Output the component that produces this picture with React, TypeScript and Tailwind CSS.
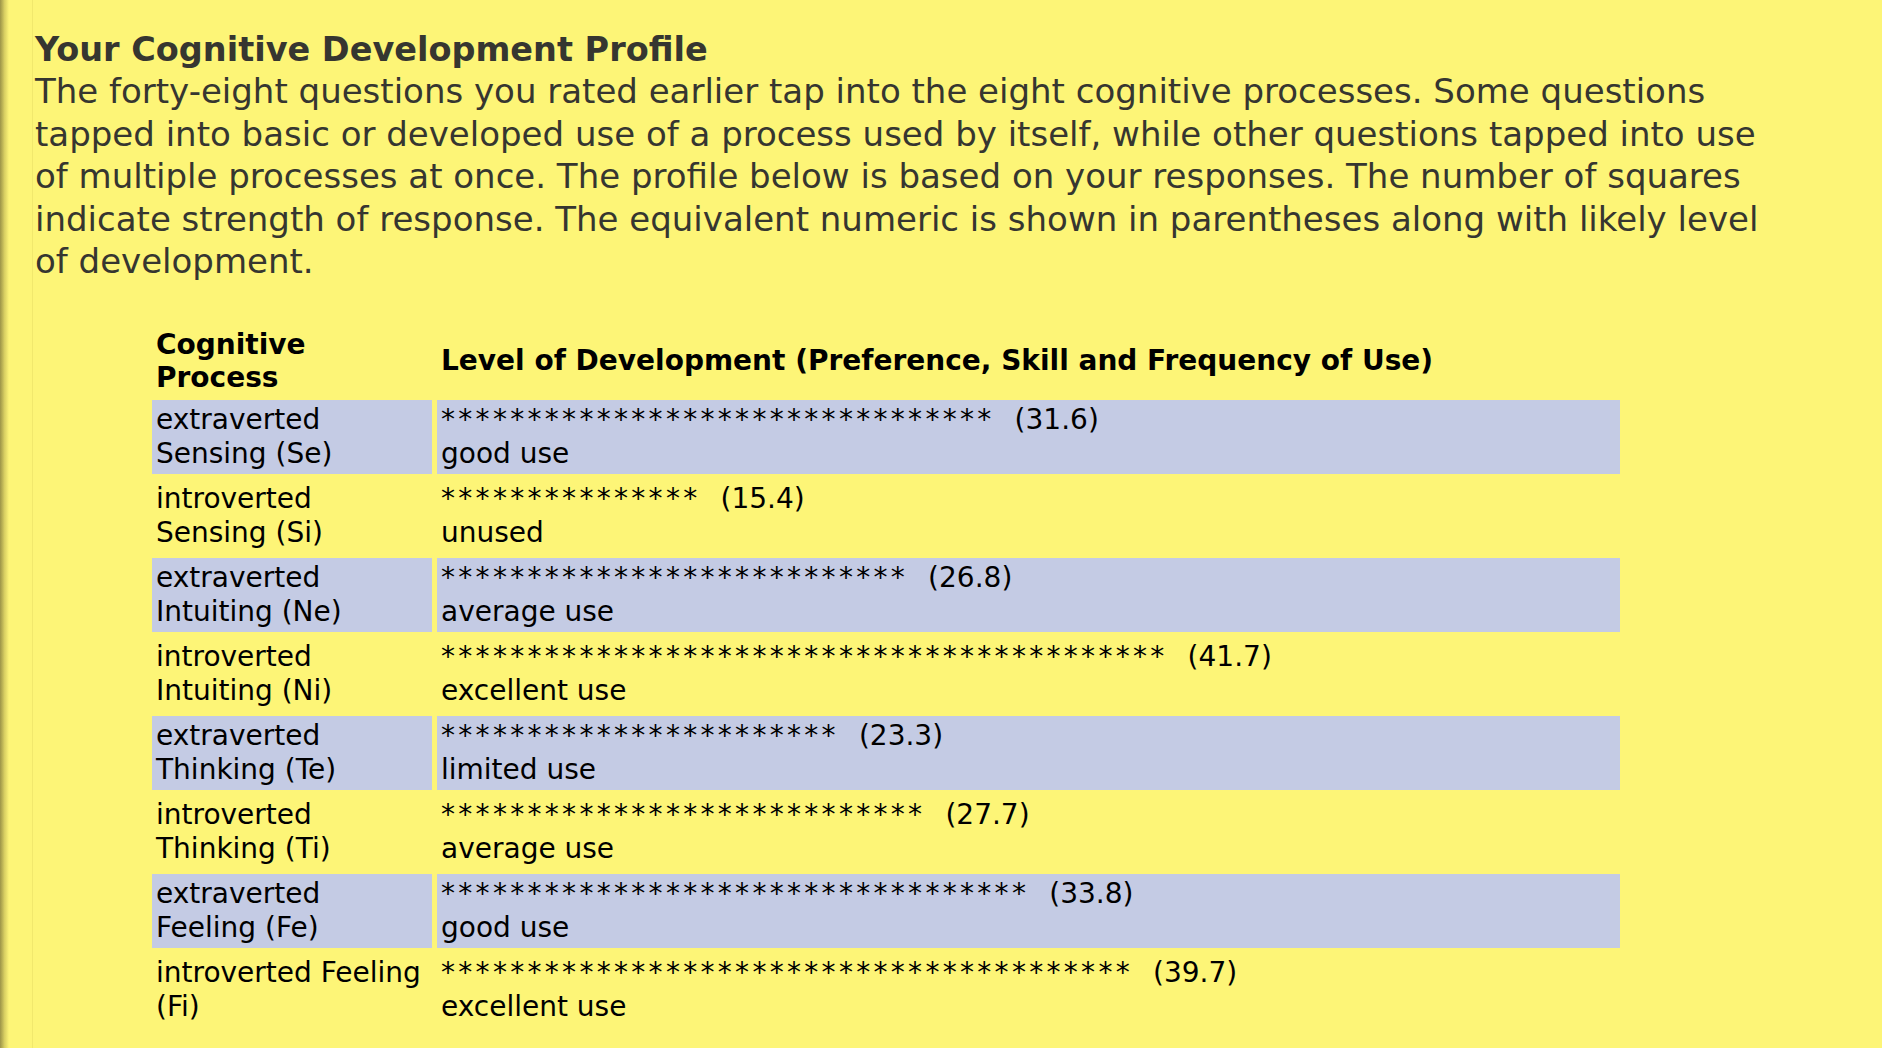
const rows = [
  { process: 'extraverted Sensing (Se)', score: 31.6, level: 'good use' },
  { process: 'introverted Sensing (Si)', score: 15.4, level: 'unused' },
  { process: 'extraverted Intuiting (Ne)', score: 26.8, level: 'average use' },
  { process: 'introverted Intuiting (Ni)', score: 41.7, level: 'excellent use' },
  { process: 'extraverted Thinking (Te)', score: 23.3, level: 'limited use' },
  { process: 'introverted Thinking (Ti)', score: 27.7, level: 'average use' },
  { process: 'extraverted Feeling (Fe)', score: 33.8, level: 'good use' },
  { process: 'introverted Feeling (Fi)', score: 39.7, level: 'excellent use' },
];

export default function App() {
  return (
    <div
      className="min-h-screen flex bg-[#fdf577]"
      style={{ fontFamily: '"DejaVu Sans", Verdana, sans-serif' }}
    >
      <div className="w-[9px] shrink-0 bg-gradient-to-r from-[#9c9448] via-[#d8cf62] to-[#fdf577]" />
      <div className="w-[23px] shrink-0" />
      <main className="flex-1 border-l border-[#f1e86d] pl-[2px] pt-[30px]">
        <div className="w-[1745px] text-[34px] leading-[42.5px] text-[#363630]">
          <h1 className="font-bold text-[33.5px] leading-[40px]">Your Cognitive Development Profile</h1>
          <p>
            The forty-eight questions you rated earlier tap into the eight cognitive processes. Some
            questions tapped into basic or developed use of a process used by itself, while other
            questions tapped into use of multiple processes at once. The profile below is based on your
            responses. The number of squares indicate strength of response. The equivalent numeric is
            shown in parentheses along with likely level of development.
          </p>
        </div>

        <table className="mt-[39px] ml-[112px] w-[1478px] table-fixed border-separate border-spacing-[5px] text-[28px] leading-[34px] text-black">
          <colgroup>
            <col className="w-[280px]" />
            <col />
          </colgroup>
          <thead>
            <tr>
              <th className="px-[4px] py-[1px] text-left font-bold leading-[33px]">Cognitive Process</th>
              <th className="px-[4px] py-[1px] text-left font-bold align-middle">
                Level of Development (Preference, Skill and Frequency of Use)
              </th>
            </tr>
          </thead>
          <tbody>
            {rows.map((row, i) => (
              <tr key={row.process} className={i % 2 === 0 ? 'bg-[#c4cbe4]' : ''}>
                <td className="px-[4px] py-[3px] align-top">{row.process}</td>
                <td className="px-[4px] py-[3px] align-top">
                  <span className="tracking-[3.3px]">{'*'.repeat(Math.round(row.score))}</span>
                  <span className="ml-[20px]">({row.score.toFixed(1)})</span>
                  <br />
                  {row.level}
                </td>
              </tr>
            ))}
          </tbody>
        </table>
      </main>
    </div>
  );
}
